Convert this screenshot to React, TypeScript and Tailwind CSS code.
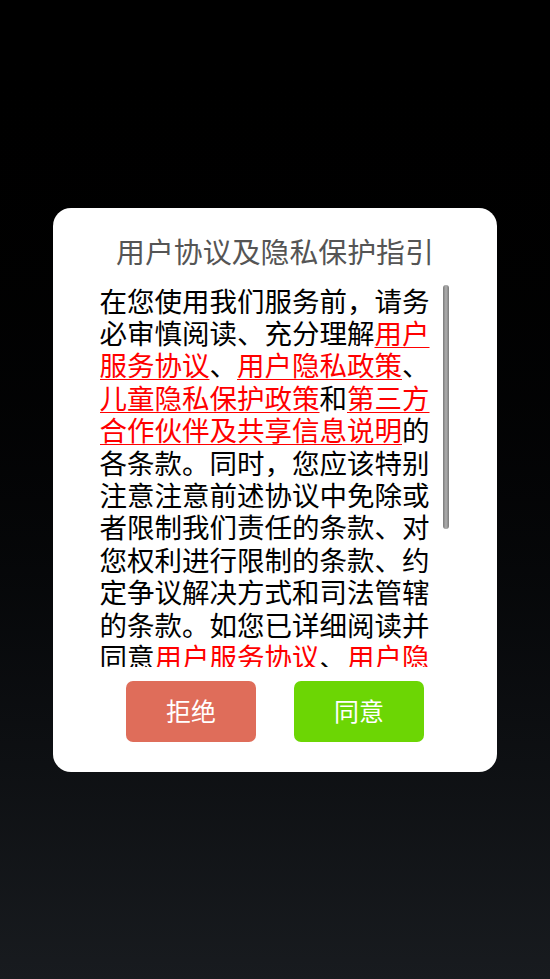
import React from "react";

const Link = ({ children }: { children: React.ReactNode }) => (
  <span className="text-[#ff0000] underline decoration-1 underline-offset-[3px]">{children}</span>
);

const App = () => {
  return (
    <div className="h-[979px] w-full bg-gradient-to-b from-black to-[#181b1f] flex items-center justify-center font-['Noto_Sans_CJK_SC','Noto_Sans',sans-serif]">
      <div className="w-[444px] h-[564px] bg-white rounded-[18px] flex flex-col items-center pt-[22px]">
        {/* title */}
        <div className="h-[40px] leading-[40px] text-[28.9px] text-[#555555] text-center">
          用户协议及隐私保护指引
        </div>

        {/* scroll area */}
        <div className="mt-[14px] flex pr-[2px]">
          <div className="w-[330px] h-[383px] overflow-hidden text-[27.5px] leading-[32.4px] text-black break-all">
            在您使用我们服务前，请务必审慎阅读、充分理解<Link>用户服务协议</Link>、<Link>用户隐私政策</Link>、
            <Link>儿童隐私保护政策</Link>和<Link>第三方合作伙伴及共享信息说明</Link>的各条款。同时，您应该特别注意注意前述协议中免除或者限制我们责任的条款、对您权利进行限制的条款、约定争议解决方式和司法管辖的条款。如您已详细阅读并同意<Link>用户服务协议</Link>、<Link>用户隐私政策</Link>、<Link>儿童隐私保护政策</Link>和<Link>第三方合作伙伴及共享信息说明</Link>，请点击“同意”开始使用我们的服务。
          </div>
          <div className="ml-[13px] w-[6px] h-[383px] pt-[1px]">
            <div className="w-[6px] h-[244px] rounded-full bg-gradient-to-r from-[#7a7a7a] via-[#b0b0b0] to-[#7a7a7a]" />
          </div>
        </div>

        {/* buttons */}
        <div className="mt-[14px] flex gap-[38px]">
          <button className="w-[130px] h-[61px] rounded-[7px] bg-[#df6d5a] text-white text-[25px]">
            拒绝
          </button>
          <button className="w-[130px] h-[61px] rounded-[7px] bg-[#6cd604] text-white text-[25px]">
            同意
          </button>
        </div>
      </div>
    </div>
  );
};

export default App;
